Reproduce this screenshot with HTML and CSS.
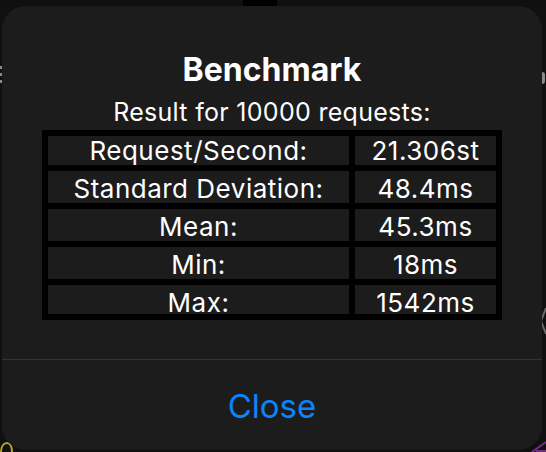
FILE: index.html
```html
<!DOCTYPE html>
<html>
<head>
<meta charset="utf-8">
<link rel="stylesheet" href="styles.css">
</head>
<body>
<div class="backdrop" aria-hidden="true">
  <div class="notch"></div>
  <div class="peek peek-left"><i></i><i></i><i></i></div>
  <div class="peek peek-right"></div>
  <svg class="peek-chev" width="6" height="30" viewBox="0 0 6 30"><path d="M6 2 L1 15 L6 28" fill="none" stroke="#6a6a6a" stroke-width="2"/></svg>
  <svg class="peek-yellow" width="14" height="16" viewBox="0 0 14 16"><path d="M1 16 C1 9 4 6 7 6 C10 6 12 9 12 16" fill="none" stroke="#b8a52a" stroke-width="2"/></svg>
  <svg class="peek-purple" width="16" height="14" viewBox="0 0 16 14"><path d="M2 14 L16 4" fill="none" stroke="#7a2a8a" stroke-width="2"/><path d="M6 13 L16 13" fill="none" stroke="#7a2a8a" stroke-width="2"/></svg>
</div>
<div class="dialog">
  <div class="content">
    <h1 class="title">Benchmark</h1>
    <p class="subtitle">Result for 10000 requests:</p>
    <div class="table">
      <div class="cell first"><span>Request/Second:</span></div>
      <div class="cell first"><span>21.306st</span></div>
      <div class="cell"><span>Standard Deviation:</span></div>
      <div class="cell"><span>48.4ms</span></div>
      <div class="cell"><span>Mean:</span></div>
      <div class="cell"><span>45.3ms</span></div>
      <div class="cell"><span>Min:</span></div>
      <div class="cell"><span>18ms</span></div>
      <div class="cell last"><span>Max:</span></div>
      <div class="cell last"><span>1542ms</span></div>
    </div>
  </div>
  <div class="actions">
    <button class="close">Close</button>
  </div>
</div>
</body>
</html>
```
FILE: styles.css
```css
html, body {
  margin: 0;
  padding: 0;
}
body {
  width: 546px;
  height: 452px;
  background: #101010;
  font-family: Inter, "Liberation Sans", sans-serif;
  color: #fff;
  overflow: hidden;
  position: relative;
}
.backdrop {
  position: absolute;
  inset: 0;
}
.notch {
  position: absolute;
  left: 243px;
  top: 0;
  width: 34px;
  height: 6px;
  background: #000;
}
.peek-left {
  position: absolute;
  left: 0;
  top: 66px;
  display: flex;
  flex-direction: column;
  gap: 4px;
}
.peek-left i {
  display: block;
  width: 2px;
  height: 3px;
  background: #8a8a8a;
}
.peek-right {
  position: absolute;
  left: 542px;
  top: 72px;
  width: 3px;
  height: 12px;
  border-radius: 0 3px 3px 0;
  background: #8a8a8a;
}
.peek-chev {
  position: absolute;
  left: 540px;
  top: 306px;
}
.peek-yellow {
  position: absolute;
  left: 0;
  top: 437px;
}
.peek-purple {
  position: absolute;
  left: 530px;
  top: 438px;
}
.dialog {
  position: relative;
  margin: 6px 0 0 2px;
  width: 540px;
  height: 444px;
  background: #1c1c1c;
  border-radius: 24px;
  display: flex;
  flex-direction: column;
  overflow: hidden;
}
.content {
  height: 353px;
  border-bottom: 1px solid #333;
  display: flex;
  flex-direction: column;
  align-items: center;
}
.title {
  margin: 46px 0 0;
  font-size: 32px;
  line-height: 36px;
  font-weight: 700;
  letter-spacing: 0;
}
.subtitle {
  margin: 9px 0 0;
  font-size: 25px;
  line-height: 30px;
  font-weight: 400;
  letter-spacing: 0.3px;
}
.table {
  margin-top: 3px;
  width: 448px;
  padding: 6px;
  background: #000;
  display: grid;
  grid-template-columns: 301px 141px;
  grid-template-rows: 29px 32px 32px 32px 29px;
  gap: 6px;
}
.cell {
  background: #1c1c1c;
  overflow: hidden;
  text-align: center;
  font-size: 26px;
  letter-spacing: 0.5px;
}
.cell span {
  display: block;
  height: 32px;
  line-height: 32px;
  padding-top: 2px;
  box-sizing: border-box;
  white-space: nowrap;
}
.cell.first span {
  margin-top: -3px;
}
.actions {
  flex: 1;
  display: flex;
  align-items: center;
  justify-content: center;
}
.close {
  background: none;
  border: 0;
  padding: 0;
  font-family: Inter, "Liberation Sans", sans-serif;
  font-size: 33px;
  line-height: 36px;
  color: #0a84ff;
  margin-top: 2px;
}
```
